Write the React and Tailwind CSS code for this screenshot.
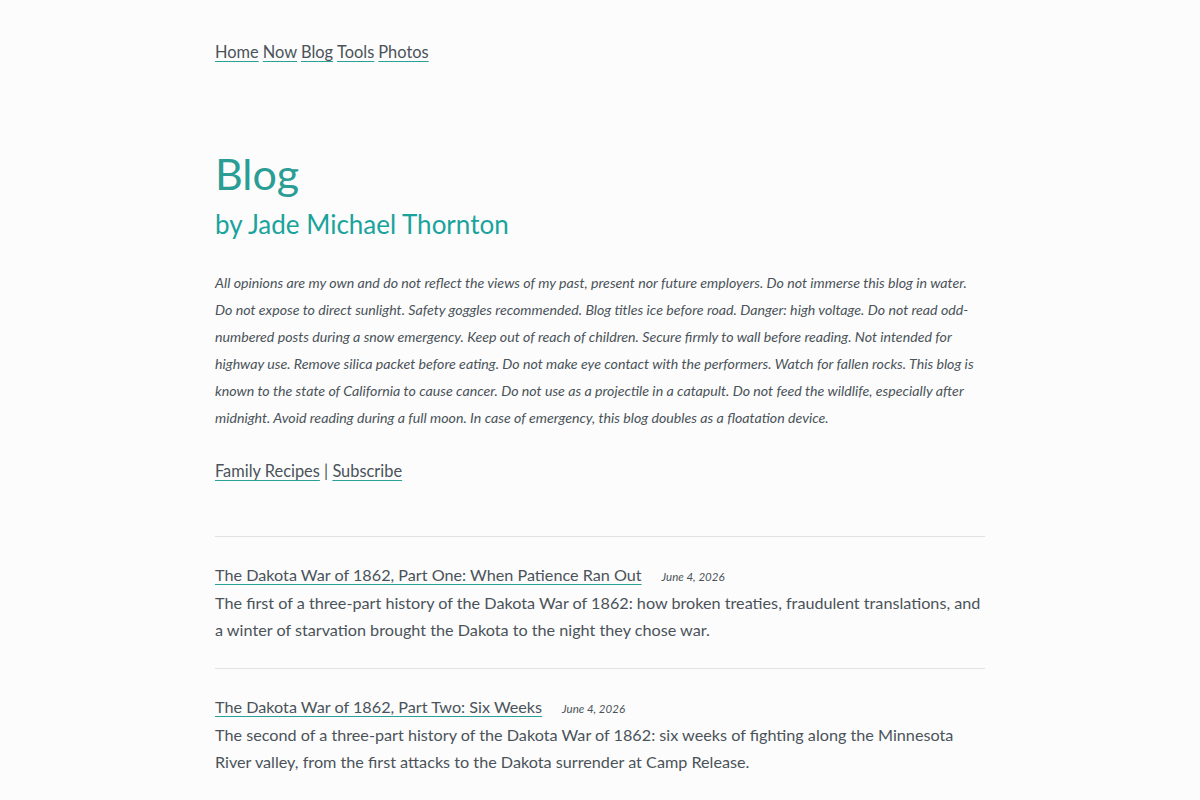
const posts = [
  {
    title: "The Dakota War of 1862, Part One: When Patience Ran Out",
    date: "June 4, 2026",
    summary:
      "The first of a three-part history of the Dakota War of 1862: how broken treaties, fraudulent translations, and a winter of starvation brought the Dakota to the night they chose war.",
  },
  {
    title: "The Dakota War of 1862, Part Two: Six Weeks",
    date: "June 4, 2026",
    summary:
      "The second of a three-part history of the Dakota War of 1862: six weeks of fighting along the Minnesota River valley, from the first attacks to the Dakota surrender at Camp Release.",
  },
  {
    title: "The Dakota War of 1862, Part Three: The Gallows at Mankato",
    date: "June 4, 2026",
    summary:
      "The last of a three-part history of the Dakota War of 1862: the trials, the executions, and the exile that followed.",
  },
];

const linkCls =
  "underline decoration-[#2aa198] decoration-1 underline-offset-[3px] hover:text-[#2aa198]";

export default function App() {
  return (
    <div className="min-h-screen bg-[#fcfcfc] text-[#4a5359] font-['Lato','Open_Sans',sans-serif]">
      <div className="mx-auto w-[770px] pt-[40px] pb-16">
        {/* Top nav */}
        <nav className="flex gap-[4px] text-[16.4px] leading-6">
          {["Home", "Now", "Blog", "Tools", "Photos"].map((n) => (
            <a key={n} href="#" className={linkCls}>
              {n}
            </a>
          ))}
        </nav>

        {/* Header */}
        <header className="mt-[84px]">
          <h1 className="text-[43px] leading-[52px] text-[#2a9d94]">Blog</h1>
          <h2 className="mt-[6px] text-[26px] leading-[36px] text-[#1aa39c]">
            by Jade Michael Thornton
          </h2>
        </header>

        <p className="mt-[27px] text-[14.2px] leading-[27px] italic">
          All opinions are my own and do not reflect the views of my past, present nor future
          employers. Do not immerse this blog in water. Do not expose to direct sunlight. Safety
          goggles recommended. Blog titles ice before road. Danger: high voltage. Do not read
          odd-numbered posts during a snow emergency. Keep out of reach of children. Secure firmly
          to wall before reading. Not intended for highway use. Remove silica packet before eating.
          Do not make eye contact with the performers. Watch for fallen rocks. This blog is known to
          the state of California to cause cancer. Do not use as a projectile in a catapult. Do not
          feed the wildlife, especially after midnight. Avoid reading during a full moon. In case of
          emergency, this blog doubles as a floatation device.
        </p>

        <div className="mt-[28px] text-[16.4px] leading-6">
          <a href="#" className={linkCls}>
            Family Recipes
          </a>{" "}
          |{" "}
          <a href="#" className={linkCls}>
            Subscribe
          </a>
        </div>

        {/* Post list */}
        <ul className="mt-[53px]">
          {posts.map((p) => (
            <li key={p.title} className="border-t border-[#e3e3e3] pt-[26px] pb-[25px]">
              <div className="flex items-baseline gap-5">
                <a href="#" className={"text-[16.2px] leading-6 " + linkCls}>
                  {p.title}
                </a>
                <span className="text-[11.5px] italic">{p.date}</span>
              </div>
              <p className="mt-[2px] text-[16.2px] leading-[27px]">{p.summary}</p>
            </li>
          ))}
        </ul>
      </div>
    </div>
  );
}
